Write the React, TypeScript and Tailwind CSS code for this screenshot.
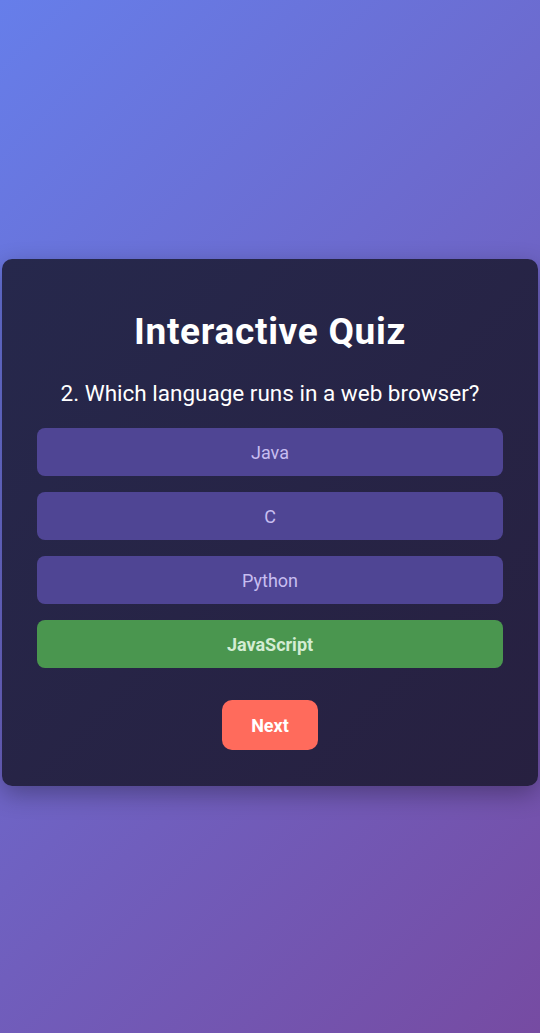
import { useState } from 'react';

const options = ['Java', 'C', 'Python', 'JavaScript'];
const correct = 'JavaScript';

export default function App() {
  const [selected] = useState<string | null>('JavaScript');

  return (
    <div
      className="min-h-screen flex items-center justify-center px-[2px] bg-[linear-gradient(135deg,#667eea_0%,#764ba2_100%)]"
      style={{ fontFamily: 'Roboto, "Noto Sans", sans-serif' }}
    >
      <div className="w-full mt-3 rounded-[10px] px-[35px] pt-[51px] pb-[36px] bg-[linear-gradient(135deg,#26284c_0%,#272040_100%)] shadow-[0_8px_24px_rgba(0,0,0,0.3)]">
        <h1 className="text-center text-[37px] leading-[44px] font-bold tracking-[0.7px] text-white">
          Interactive Quiz
        </h1>
        <p className="mt-[24px] text-center text-[22.5px] leading-[30px] text-white">
          2. Which language runs in a web browser?
        </p>

        {/* Options */}
        <div className="mt-[20px] flex flex-col gap-4">
          {options.map((opt) => {
            const isCorrect = selected && opt === correct;
            return (
              <button
                key={opt}
                className={
                  isCorrect
                    ? 'h-12 w-full rounded-lg bg-[#4a964f] text-[18px] font-bold text-[#d3ecd3]'
                    : 'h-12 w-full rounded-lg bg-[#4f4594] text-[18px] text-[#c7bdf0]'
                }
              >
                {opt}
              </button>
            );
          })}
        </div>

        <div className="mt-8 flex justify-center">
          <button className="h-[50px] w-24 rounded-[10px] bg-[#ff6b5c] text-[18px] font-bold text-white">
            Next
          </button>
        </div>
      </div>
    </div>
  );
}
